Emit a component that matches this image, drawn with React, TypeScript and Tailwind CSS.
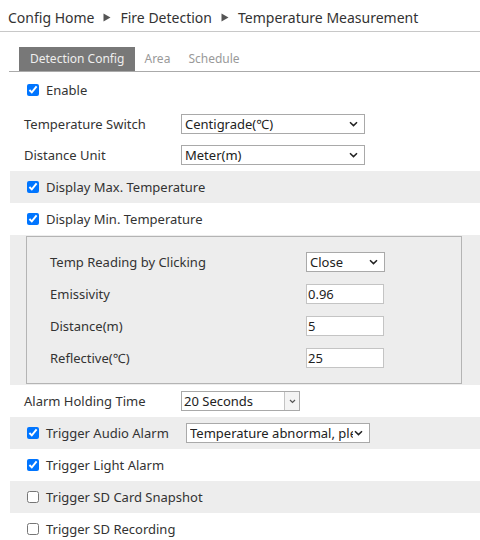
import React from 'react';

const Chevron = () => (
  <svg width="9" height="6" viewBox="0 0 9 6" className="pointer-events-none absolute right-[7px] top-1/2 -translate-y-1/2">
    <path d="M1 1.2 L4.5 4.6 L8 1.2" fill="none" stroke="#222" strokeWidth="1.5" />
  </svg>
);

const Crumb = () => (
  <svg width="8" height="9" viewBox="0 0 8 9" className="mx-[9px]">
    <path d="M0.5 0.5 L7.5 4.5 L0.5 8.5 Z" fill="#555" />
  </svg>
);

const Select = ({ value, className }: { value: string; className: string }) => (
  <div className={`relative h-[20px] ${className}`}>
    <select
      defaultValue={value}
      className="h-full w-full appearance-none border border-[#a9a9a9] bg-white pl-[3px] pr-[16px] text-[13px] leading-[18px] text-[#222] outline-none"
    >
      <option>{value}</option>
    </select>
    <Chevron />
  </div>
);

const Check = ({ checked }: { checked: boolean }) => (
  <input
    type="checkbox"
    defaultChecked={checked}
    className="m-0 h-[12px] w-[12px] accent-[#0075ff]"
  />
);

const CheckRow = ({ label, checked, gray, children }: { label: string; checked: boolean; gray?: boolean; children?: React.ReactNode }) => (
  <div className={`flex h-[32px] items-center pl-[17px] ${gray ? 'bg-[#ededed]' : ''}`}>
    <Check checked={checked} />
    <span className={`ml-[7px] translate-y-[1px] ${children ? 'w-[140px]' : ''}`}>{label}</span>
    {children}
  </div>
);

const TextInput = ({ value }: { value: string }) => (
  <input
    defaultValue={value}
    className="h-[20px] w-[78px] border border-[#c4c4c4] bg-white px-[1px] text-[13px] text-[#222] outline-none"
  />
);

const Label = ({ text, w }: { text: string; w: string }) => (
  <span className={`${w} translate-y-[1px]`}>{text}</span>
);

export default function App() {
  return (
    <div className="h-[540px] w-[480px] overflow-hidden bg-white text-[13px] text-[#333]" style={{ fontFamily: '"Segoe UI", "Noto Sans", sans-serif' }}>
      <div className="flex h-[32px] items-center border-b border-[#c8c8c8] pl-[8px] pt-[3px] text-[14px] text-[#333]">
        <span>Config Home</span>
        <Crumb />
        <span>Fire Detection</span>
        <Crumb />
        <span>Temperature Measurement</span>
      </div>

      <div className="ml-[9px] mt-[15px] flex border-b border-[#aaa] pl-[10px] text-[12px]">
        <div className="flex h-[24px] items-center bg-[#787878] px-[11px] text-[#eee]">Detection Config</div>
        <div className="flex h-[24px] items-center px-[9px] text-[#999]">Area</div>
        <div className="flex h-[24px] items-center px-[9px] text-[#999]">Schedule</div>
      </div>

      <div className="ml-[10px]">
        <div className="flex h-[36px] items-center pl-[17px]">
          <Check checked />
          <span className="ml-[7px] translate-y-[1px]">Enable</span>
        </div>

        <div className="flex h-[31px] items-center pl-[14px]">
          <Label w="w-[157px]" text="Temperature Switch" />
          <Select value="Centigrade(℃)" className="w-[184px]" />
        </div>
        <div className="flex h-[32px] items-center pl-[14px]">
          <Label w="w-[157px]" text="Distance Unit" />
          <Select value="Meter(m)" className="w-[184px]" />
        </div>

        <CheckRow label="Display Max. Temperature" checked gray />
        <CheckRow label="Display Min. Temperature" checked />

        <div className="bg-[#ededed] pb-[1px] pt-[1px]">
          <div className="ml-[16px] w-[436px] border border-[#b4b4b4] py-[9px] pl-[23px]">
            <div className="flex h-[32px] items-center">
              <Label w="w-[256px]" text="Temp Reading by Clicking" />
              <Select value="Close" className="w-[79px]" />
            </div>
            <div className="flex h-[32px] items-center">
              <Label w="w-[256px]" text="Emissivity" />
              <TextInput value="0.96" />
            </div>
            <div className="flex h-[32px] items-center">
              <Label w="w-[256px]" text="Distance(m)" />
              <TextInput value="5" />
            </div>
            <div className="flex h-[32px] items-center">
              <Label w="w-[256px]" text="Reflective(℃)" />
              <TextInput value="25" />
            </div>
          </div>
        </div>

        <div className="flex h-[32px] items-center pl-[14px]">
          <Label w="w-[157px]" text="Alarm Holding Time" />
          <div className="flex h-[20px] w-[119px] border border-[#a9a9a9] bg-white">
            <span className="flex-1 pl-[2px] leading-[18px] text-[#222]">20 Seconds</span>
            <div className="flex w-[15px] items-center justify-center border-l border-[#c4c4c4] bg-[#f4f4f4]">
              <svg width="7" height="5" viewBox="0 0 7 5">
                <path d="M1 1 L3.5 3.5 L6 1" fill="none" stroke="#555" strokeWidth="1.2" />
              </svg>
            </div>
          </div>
        </div>

        <CheckRow label="Trigger Audio Alarm" checked gray>
          <Select value="Temperature abnormal, please pay attention" className="w-[184px]" />
        </CheckRow>
        <CheckRow label="Trigger Light Alarm" checked />
        <CheckRow label="Trigger SD Card Snapshot" checked={false} gray />
        <CheckRow label="Trigger SD Recording" checked={false} />
      </div>
    </div>
  );
}
